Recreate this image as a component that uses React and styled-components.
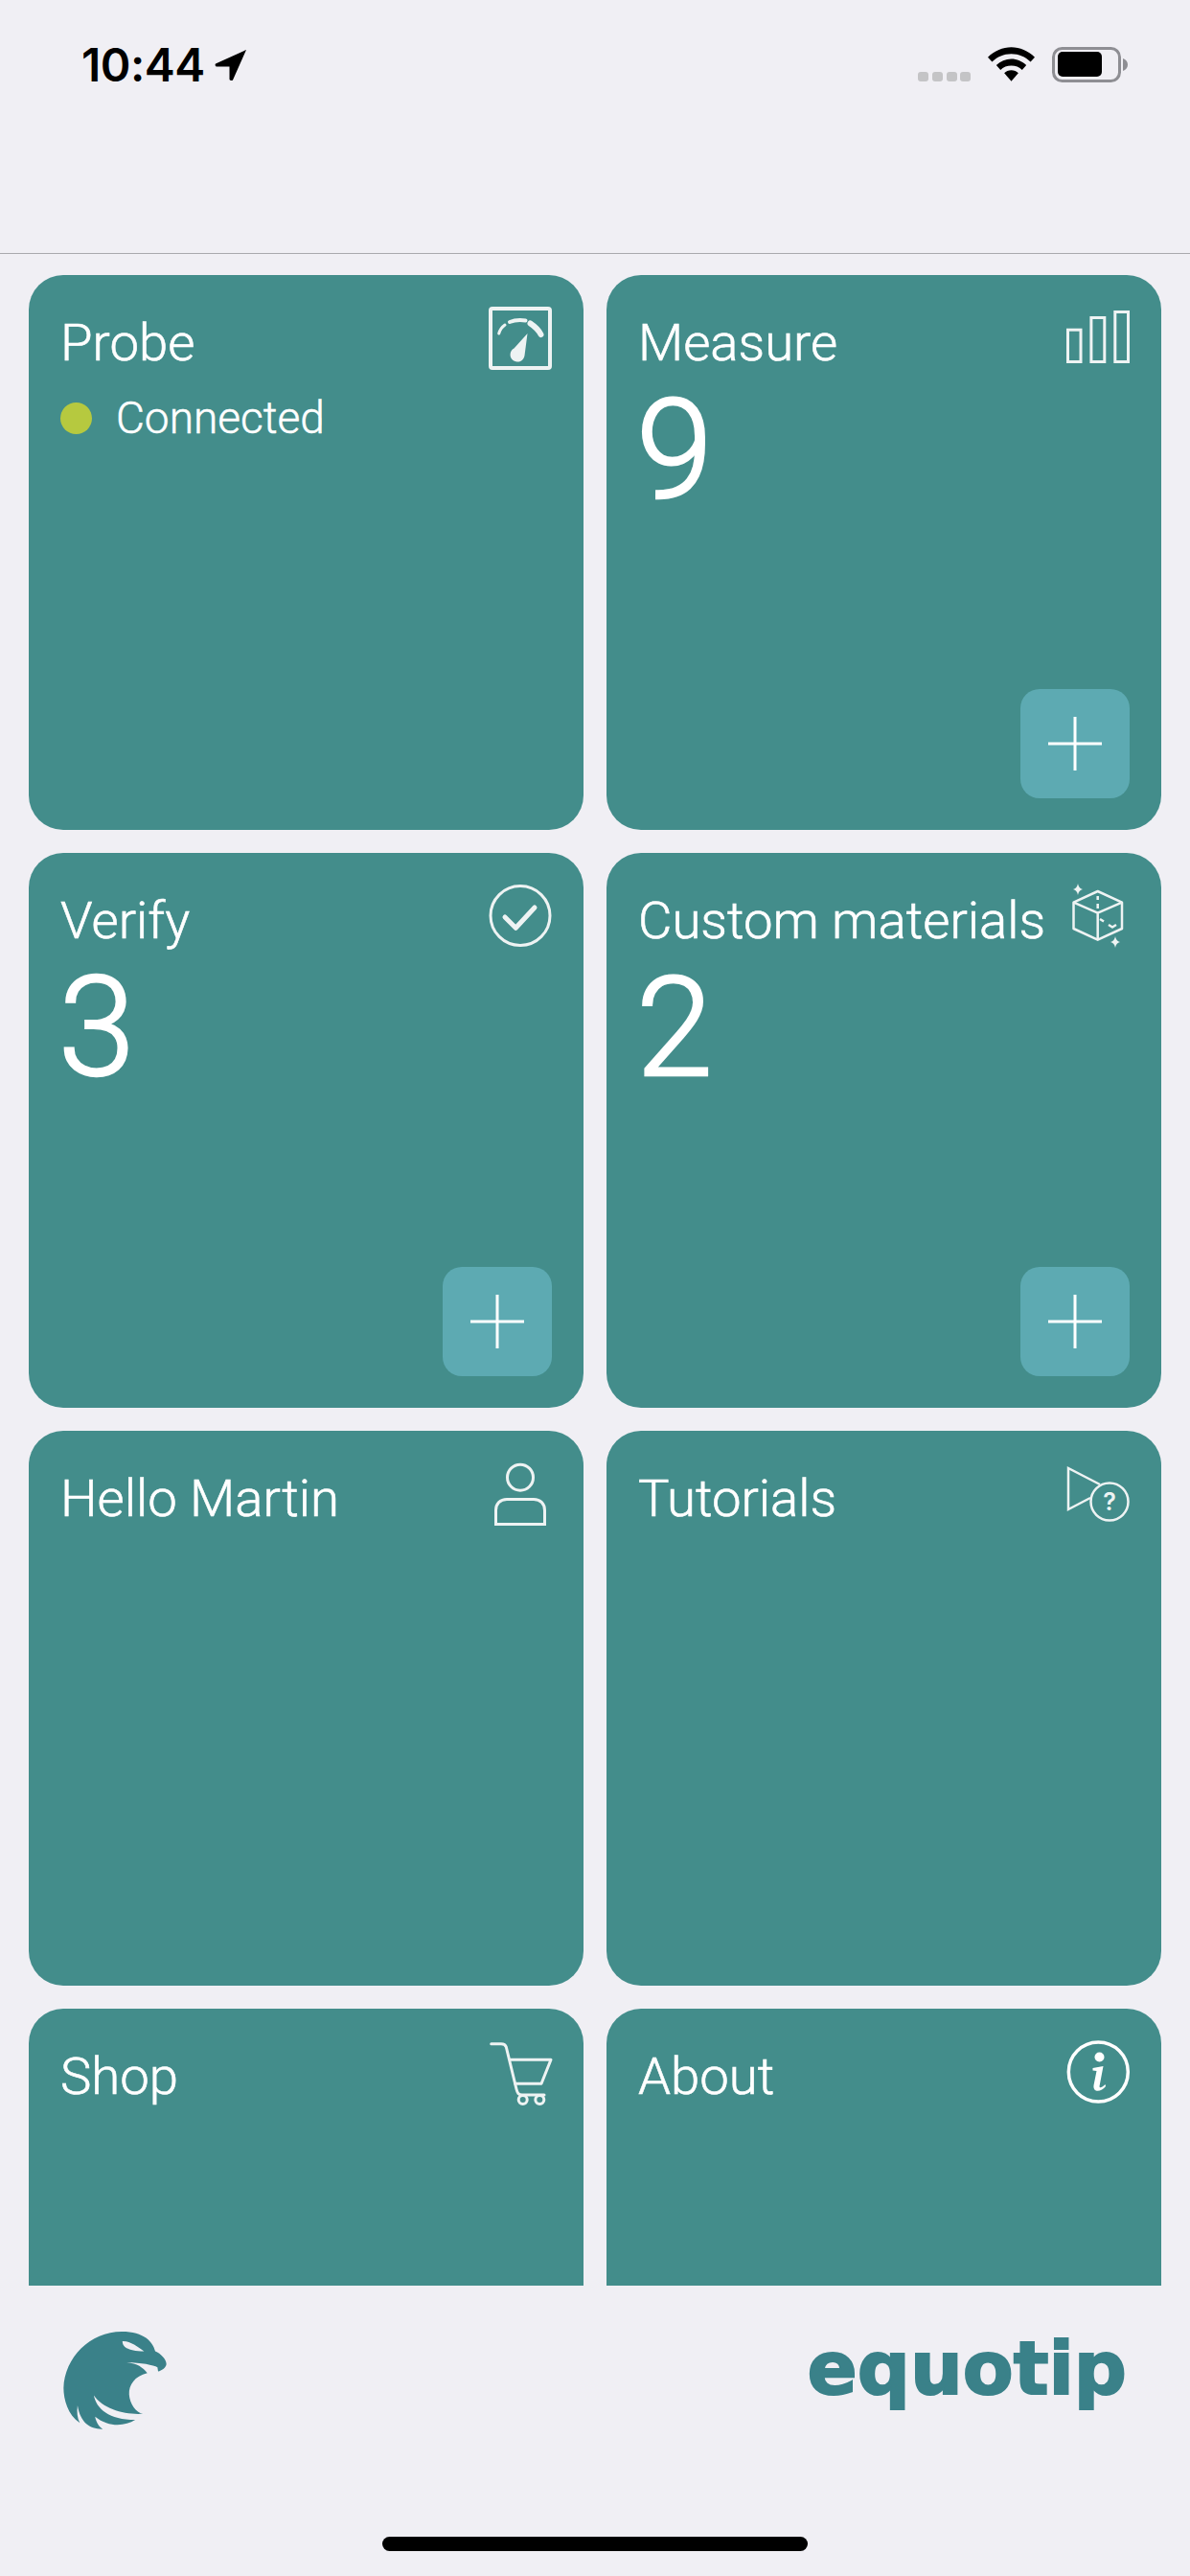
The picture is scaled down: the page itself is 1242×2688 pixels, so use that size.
import React from "react";
import styled, { createGlobalStyle } from "styled-components";

const Global = createGlobalStyle`
  html, body { margin: 0; padding: 0; background: #f0eff4; }
  body { font-family: "Roboto", "Liberation Sans", sans-serif; }
`;

const Screen = styled.div`
  position: relative;
  width: 1242px;
  height: 2688px;
  overflow: hidden;
  background: #f0eff4;
  display: flex;
  flex-direction: column;
`;

const Header = styled.header`
  flex: none;
  height: 265px;
  box-sizing: border-box;
  border-bottom: 1px solid #a9a9ad;
`;

const StatusBar = styled.div`
  box-sizing: border-box;
  padding: 44px 65px 0 85px;
  display: flex;
  justify-content: space-between;
  align-items: flex-start;
`;

const Clock = styled.div`
  display: flex;
  align-items: center;
  gap: 10px;
  font-family: "Inter", sans-serif;
  font-size: 48px;
  line-height: 48px;
  font-weight: 600;
  letter-spacing: -0.5px;
  color: #000;
`;

const StatusIcons = styled.div`
  display: flex;
  align-items: flex-start;
  gap: 18px;
  margin-top: 5px;
  svg { display: block; }
`;

const SignalSlot = styled.div`
  margin-top: 26px;
`;

const Grid = styled.main`
  flex: none;
  height: 2120px;
  box-sizing: border-box;
  padding: 22px 30px 0;
  display: grid;
  grid-template-columns: 579px 579px;
  grid-auto-rows: 579px;
  gap: 24px;
  overflow: hidden;
`;

const Card = styled.section`
  position: relative;
  background: #438d8b;
  border-radius: 36px;
  color: #fff;
  box-sizing: border-box;
  padding: 38px 33px;
`;

const Title = styled.h2`
  margin: 0;
  font-family: "Roboto", sans-serif;
  font-size: 54.5px;
  line-height: 65px;
  font-weight: 300;
  -webkit-text-stroke: 0.6px #fff;
  white-space: nowrap;
`;

const IconSlot = styled.div`
  position: absolute;
  top: 34px;
  right: 33px;
  width: 66px;
  height: 66px;
  svg { display: block; overflow: visible; }
`;

const Count = styled.div`
  margin: 10px 0 0 -2px;
  font-family: "Roboto", sans-serif;
  font-size: 144px;
  line-height: 140px;
  font-weight: 300;
  -webkit-text-stroke: 2.5px #fff;
`;

const Status = styled.div`
  margin-top: 18px;
  display: flex;
  align-items: center;
  gap: 25px;
  font-family: "Roboto", sans-serif;
  font-size: 46px;
  line-height: 56px;
  font-weight: 300;
  -webkit-text-stroke: 0.5px #fff;
`;

const Dot = styled.span`
  width: 33px;
  height: 33px;
  border-radius: 50%;
  background: #b6c93f;
`;

const AddButton = styled.button`
  position: absolute;
  right: 33px;
  bottom: 33px;
  width: 114px;
  height: 114px;
  padding: 0;
  border: 0;
  border-radius: 20px;
  background: #5daab2;
  display: flex;
  align-items: center;
  justify-content: center;
`;

const Footer = styled.footer`
  position: relative;
  flex: 1;
  background: #f0eff4;
  display: flex;
  justify-content: space-between;
  align-items: flex-start;
  padding: 48px 66px 0 66px;
`;

const Wordmark = styled.div`
  font-family: "DejaVu Sans", sans-serif;
  font-weight: 700;
  font-size: 77px;
  line-height: 80px;
  color: #3a8189;
  -webkit-text-stroke: 2px #3a8189;
  margin-top: -1px;
`;

const HomeBar = styled.div`
  position: absolute;
  left: 399px;
  bottom: 26px;
  width: 444px;
  height: 15px;
  border-radius: 8px;
  background: #000;
`;

const line = "#eef3f3";
const stroke = { fill: "none", stroke: line, strokeWidth: 3 };

const Gauge = () => (
  <svg width="66" height="66" viewBox="0 0 66 66">
    <rect x="2" y="1" width="62" height="62" rx="2" {...stroke} strokeWidth="4" />
    <g {...stroke} strokeLinecap="round">
      <path d="M10.700 27C11.800 23 13.500 20.500 17 18" strokeWidth="3" />
      <path d="M22 15C27 13 33 12.700 38.500 13.500" strokeWidth="4" />
      <path d="M43.500 16.500C48 19.500 52 23 54.500 28" strokeWidth="6" />
    </g>
    <path d="M40.500 27L37.500 50A7.500 7.500 0 1 1 26.500 42.500Z" fill={line} />
  </svg>
);

const Bars = () => (
  <svg width="66" height="66" viewBox="0 0 66 66">
    <g {...stroke}>
      <rect x="1.500" y="23.200" width="13.500" height="33.300" />
      <rect x="25.900" y="10.500" width="13.900" height="46" />
      <rect x="50.800" y="4.500" width="13.700" height="52" />
    </g>
  </svg>
);

const Check = () => (
  <svg width="66" height="66" viewBox="0 0 66 66">
    <circle cx="33" cy="31.500" r="31" {...stroke} />
    <path d="M17 33L28.300 44.300L48 23" {...stroke} strokeWidth="5" strokeLinecap="round" strokeLinejoin="round" />
  </svg>
);

const Cube = () => (
  <svg width="66" height="66" viewBox="0 0 66 66">
    <g {...stroke} strokeWidth="2.500" strokeLinejoin="round">
      <path d="M32.700 6L58 17.700V45L32.700 56.700L7.500 45V17.700Z" />
      <path d="M7.500 17.700L32.700 28.700L58 17.700M32.700 28.700V56.700" />
      <path d="M32.700 11V15M32.700 19V24M35 35L39 37.500M44 41L48 43.500L52 41" />
    </g>
    <path d="M12 -2Q12.800 3 17 4Q12.800 5 12 10Q11.200 5 7 4Q11.200 3 12 -2Z" fill={line} />
    <path d="M51 53Q51.800 58 56 59Q51.800 60 51 65Q50.200 60 46 59Q50.200 58 51 53Z" fill={line} />
  </svg>
);

const Person = () => (
  <svg width="66" height="66" viewBox="0 0 66 66">
    <g {...stroke}>
      <ellipse cx="33" cy="14.700" rx="13.500" ry="13.500" />
      <path d="M7.500 63.500V49C7.500 42 12 37.500 19 37.500H47C54 37.500 58.500 42 58.500 49V63.500Z" />
    </g>
  </svg>
);

const PlayHelp = () => (
  <svg width="66" height="66" viewBox="0 0 66 66">
    <g {...stroke} strokeWidth="2.500">
      <path d="M35 22L2 5V48L25 36" />
      <circle cx="45" cy="40" r="19.500" />
    </g>
    <text x="45" y="49" textAnchor="middle" fontFamily="Inter, sans-serif" fontSize="25" fontWeight="600" fill={line}>?</text>
  </svg>
);

const Cart = () => (
  <svg width="66" height="66" viewBox="0 0 66 66">
    <g {...stroke} strokeLinecap="round" strokeLinejoin="round">
      <path d="M2.700 2.700H13C16 2.700 17.500 3.500 18.300 6L29 50C30 54 31 56 35 56H58" />
      <path d="M22.700 19.300H65L55 44.300H27.700" />
      <circle cx="35.700" cy="61" r="4.500" />
      <circle cx="53.300" cy="61" r="4.500" />
    </g>
  </svg>
);

const Info = () => (
  <svg width="66" height="66" viewBox="0 0 66 66">
    <circle cx="33.300" cy="32" r="31" fill="none" stroke="#fff" strokeWidth="3.500" />
    <circle cx="34.500" cy="16.500" r="5" fill="#fff" />
    <path d="M27.500 28L38.500 26L34.500 47C34.500 49 36.500 49 40.500 45L41 47C36.500 53 27.500 54 28.500 46L31.500 31L27.500 30.500Z" fill="#fff" />
  </svg>
);

const Plus = () => (
  <svg width="56" height="56" viewBox="0 0 56 56">
    <path d="M28 0V56M0 28H56" stroke="#fff" strokeWidth="3" />
  </svg>
);

const LocationArrow = () => (
  <svg width="34" height="34" viewBox="0 0 34 34">
    <path d="M33 1L1 15.500C0 17 1 18.500 2.500 18.500H15.500V31.500C15.500 33 18 33.500 19 32.500Z" fill="#000" />
  </svg>
);

const Signal = () => (
  <svg width="55" height="10" viewBox="0 0 55 10">
    {[0, 15, 30, 44].map((x) => (
      <rect key={x} x={x} y="0" width="11" height="10" rx="3" fill="#c4c4c6" />
    ))}
  </svg>
);

const Wifi = () => (
  <svg width="49" height="36" viewBox="0 0 50 36">
    <path d="M25 0C34 0 43 4 50 10.500L45.500 15.500C40 10 33 7 25 7C17 7 10 10 4.500 15.500L0 10.500C7 4 16 0 25 0Z" fill="#000" />
    <path d="M25 12.500C31 12.500 36.500 15 41 19L36.500 24C33.500 21 29.500 19.500 25 19.500C20.500 19.500 16.500 21 13.500 24L9 19C13.500 15 19 12.500 25 12.500Z" fill="#000" />
    <path d="M25 24.500C28 24.500 30.500 25.500 32.500 27.500L25 36L17.500 27.500C19.500 25.500 22 24.500 25 24.500Z" fill="#000" />
  </svg>
);

const Battery = () => (
  <svg width="79" height="37" viewBox="0 0 79 37">
    <rect x="1.500" y="1.500" width="69" height="34" rx="9" fill="none" stroke="#8e8e93" strokeWidth="3" />
    <rect x="6" y="5" width="46" height="26" rx="5" fill="#000" />
    <path d="M74 12C77 13 79 15.500 79 18.500C79 21.500 77 24 74 25Z" fill="#8e8e93" />
  </svg>
);

const Eagle = () => (
  <svg width="108" height="102" viewBox="47 38 323 307">
    <path
      fill="#3a8189"
      fillRule="evenodd"
      d="M230 38C300 38 328 70 335 100C352 107 370 125 370 140C368 152 355 160 344 163L342 150C330 143 290 135 245 135C280 138 295 150 310 168C270 178 252 205 253 235C255 265 275 292 296 296C240 300 170 280 142 238C150 280 190 315 272 315C240 335 190 340 146 305C150 325 160 338 170 344C130 345 100 325 91 270C88 290 90 310 98 325C60 300 47 250 47 215C50 120 130 38 230 38ZM232 68C232 85 245 98 300 100C280 85 255 66 232 68Z"
    />
  </svg>
);

const cards = [
  { title: "Probe", icon: <Gauge />, connected: true },
  { title: "Measure", icon: <Bars />, count: 9, add: true },
  { title: "Verify", icon: <Check />, count: 3, add: true },
  { title: "Custom materials", icon: <Cube />, count: 2, add: true },
  { title: "Hello Martin", icon: <Person /> },
  { title: "Tutorials", icon: <PlayHelp /> },
  { title: "Shop", icon: <Cart /> },
  { title: "About", icon: <Info /> },
];

export default function App() {
  return (
    <>
      <Global />
      <Screen>
        <Header>
          <StatusBar>
            <Clock>10:44<LocationArrow /></Clock>
            <StatusIcons>
              <SignalSlot><Signal /></SignalSlot>
              <Wifi />
              <Battery />
            </StatusIcons>
          </StatusBar>
        </Header>
        <Grid>
          {cards.map((c) => (
            <Card key={c.title}>
              <Title>{c.title}</Title>
              <IconSlot>{c.icon}</IconSlot>
              {c.connected && (
                <Status><Dot />Connected</Status>
              )}
              {c.count !== undefined && <Count>{c.count}</Count>}
              {c.add && <AddButton aria-label="Add"><Plus /></AddButton>}
            </Card>
          ))}
        </Grid>
        <Footer>
          <Eagle />
          <Wordmark>equotip</Wordmark>
          <HomeBar />
        </Footer>
      </Screen>
    </>
  );
}
